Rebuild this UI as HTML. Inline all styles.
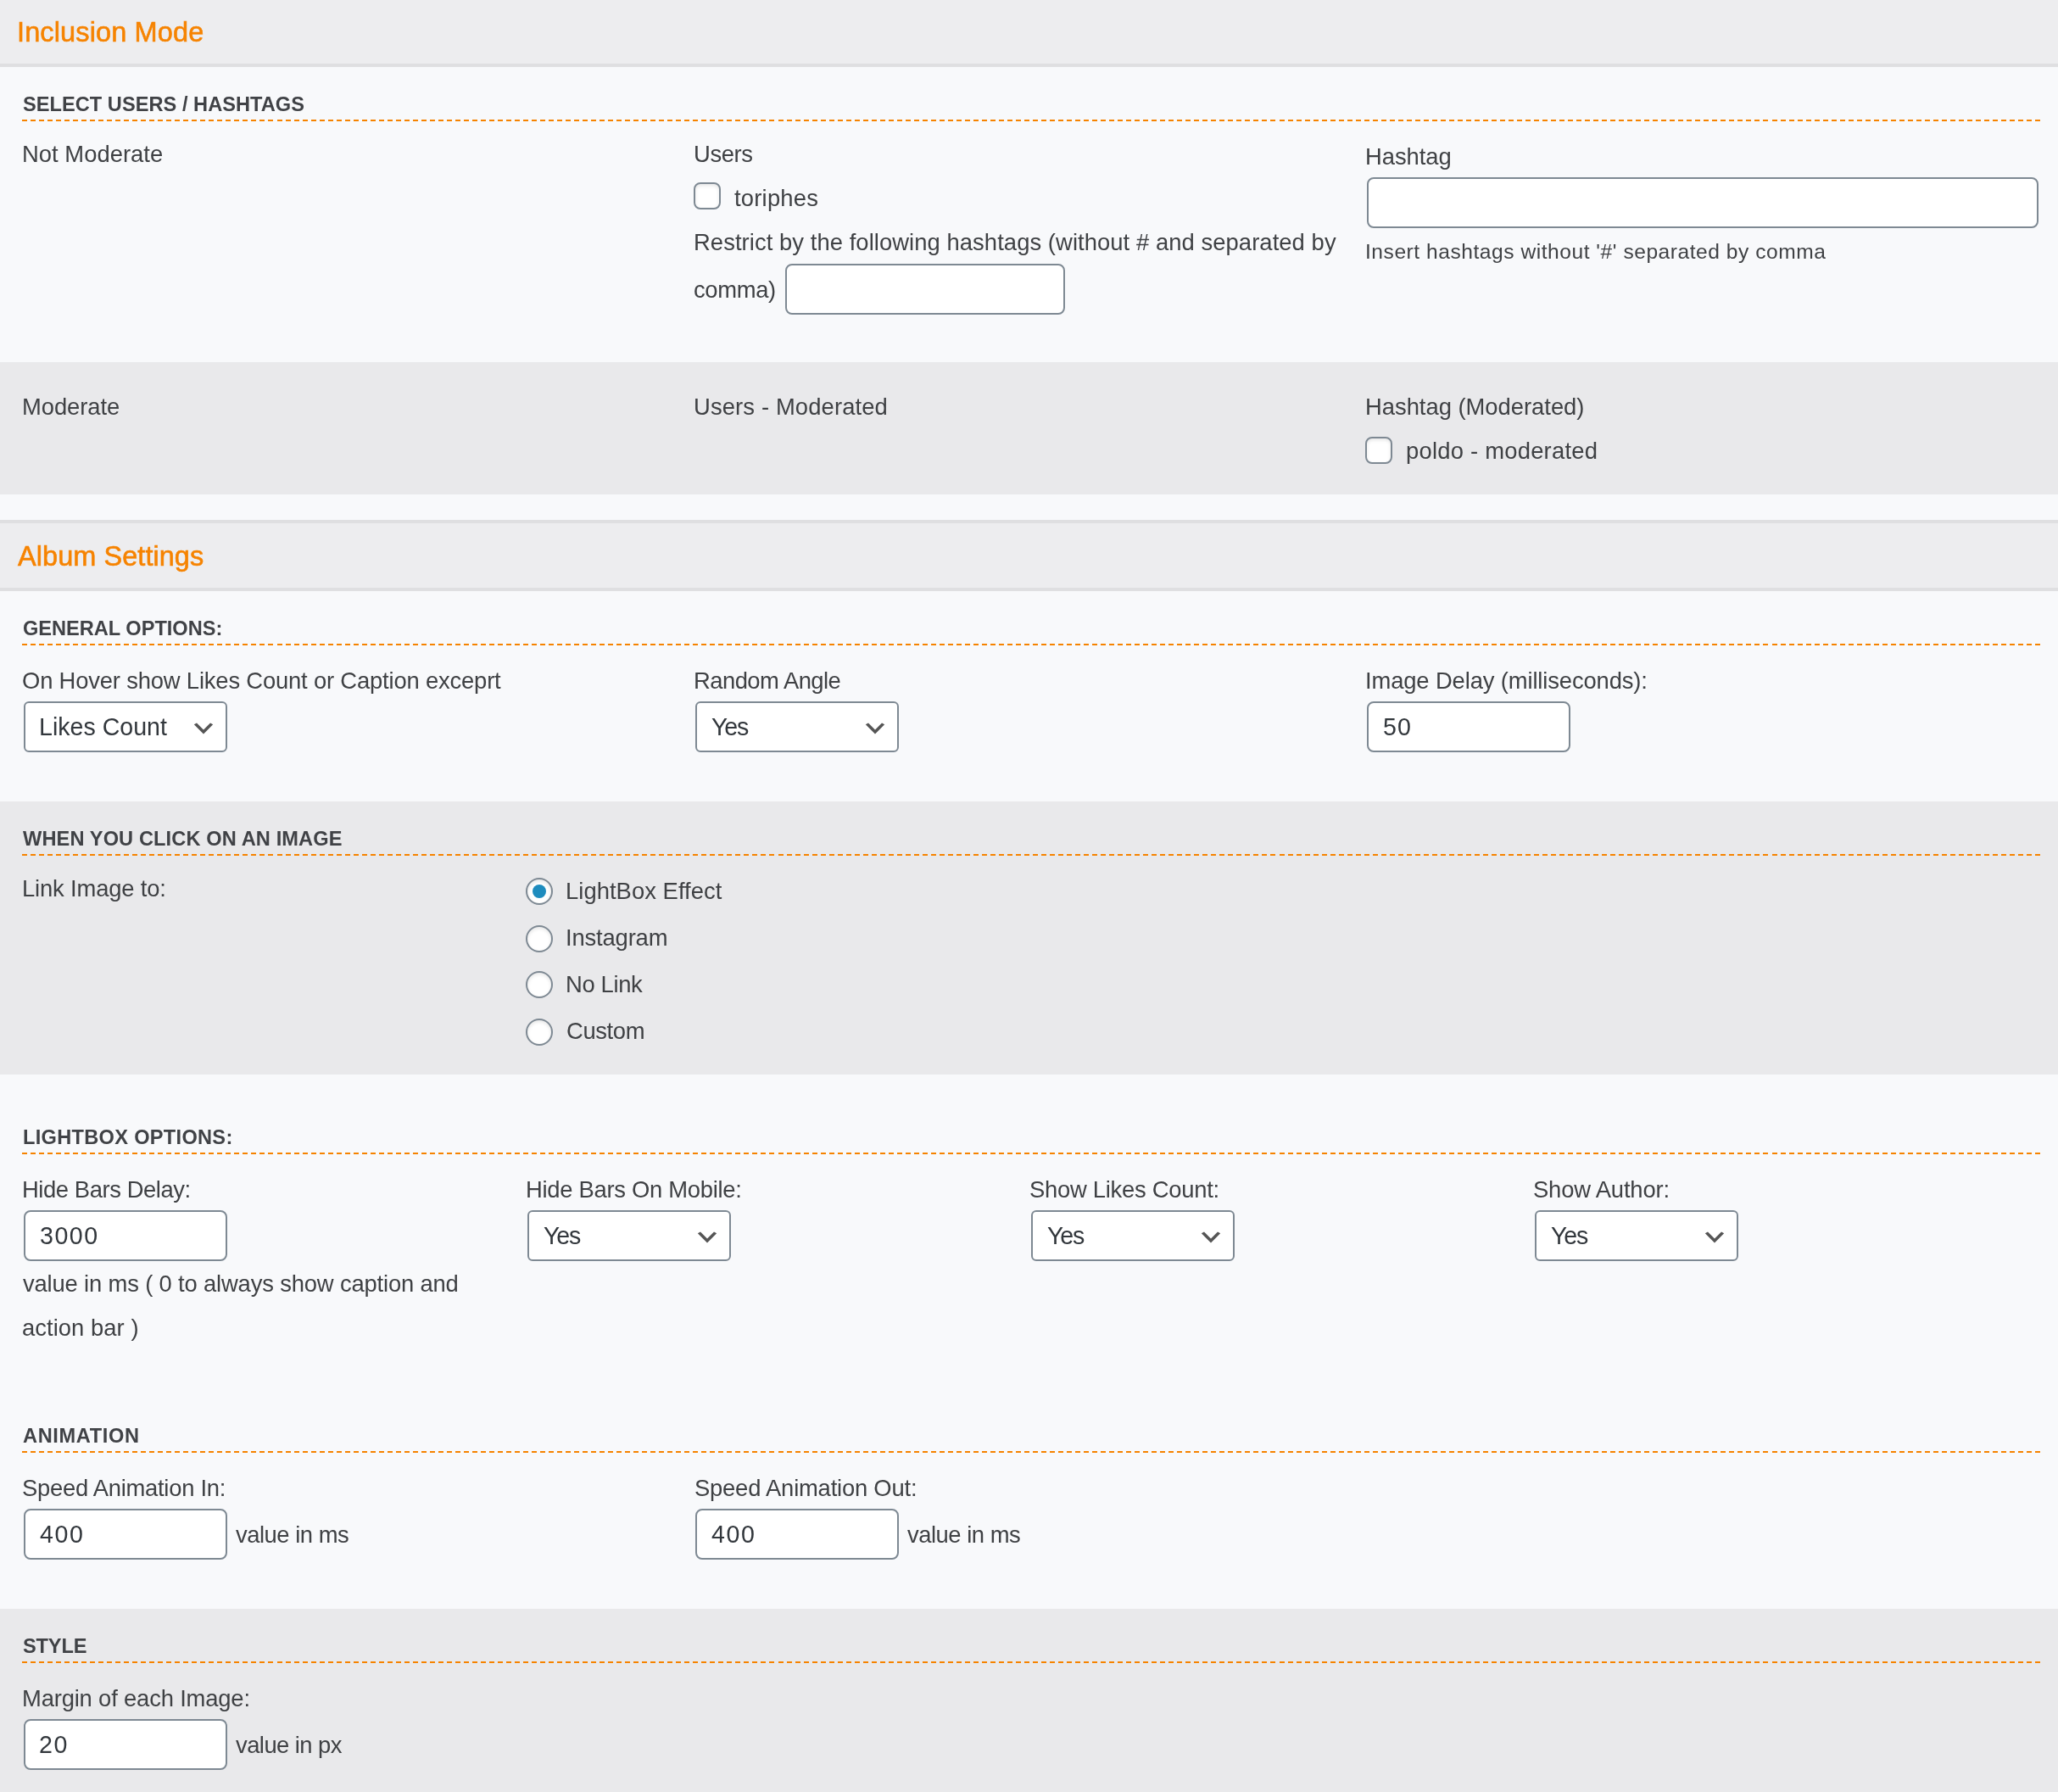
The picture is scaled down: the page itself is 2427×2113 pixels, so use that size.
<!DOCTYPE html>
<html><head><meta charset="utf-8"><style>
html,body{margin:0;padding:0;}
body{width:2427px;height:2113px;overflow:hidden;position:relative;background:#f8f9fb;font-family:"Liberation Sans",sans-serif;color:#3f4144;}
.t{position:absolute;white-space:nowrap;will-change:transform;}
.r{position:absolute;}
.b{position:absolute;box-sizing:border-box;border:2px solid #7e8993;background:#fff;}
.d{position:absolute;left:26px;width:2380px;height:2px;background:repeating-linear-gradient(90deg,#f68300 0 6px,transparent 6px 10.017px);}
.ch{position:absolute;}
.rd{position:absolute;box-sizing:border-box;width:32px;height:32px;border:2px solid #7e8993;border-radius:50%;background:#fff;box-shadow:inset 0 2px 4px rgba(0,0,0,.1);}
.cb{position:absolute;box-sizing:border-box;width:32px;height:32px;border:2px solid #7e8993;border-radius:8px;background:#fff;box-shadow:inset 0 2px 4px rgba(0,0,0,.1);}
.dot{position:absolute;width:16px;height:16px;border-radius:50%;background:#1e8cbe;}
</style></head><body>
<div class="r" style="left:0px;top:0px;width:2427px;height:75px;background:#ededef"></div><div class="r" style="left:0px;top:75px;width:2427px;height:4px;background:#dfdfe1"></div><div class="r" style="left:0px;top:427px;width:2427px;height:156px;background:#e9e9eb"></div><div class="r" style="left:0px;top:613px;width:2427px;height:4px;background:#dfdfe1"></div><div class="r" style="left:0px;top:617px;width:2427px;height:76px;background:#ededef"></div><div class="r" style="left:0px;top:693px;width:2427px;height:4px;background:#dfdfe1"></div><div class="r" style="left:0px;top:945px;width:2427px;height:322px;background:#e9e9eb"></div><div class="r" style="left:0px;top:1897px;width:2427px;height:216px;background:#e9e9eb"></div><div class="d" style="top:141px"></div><div class="d" style="top:759px"></div><div class="d" style="top:1007px"></div><div class="d" style="top:1359px"></div><div class="d" style="top:1711px"></div><div class="d" style="top:1959px"></div>
<div class="cb" style="left:818px;top:215px"></div><div class="cb" style="left:1610px;top:515px"></div><div class="b" style="left:926px;top:311px;width:330px;height:60px;border-radius:8px"></div><div class="b" style="left:1612px;top:209px;width:792px;height:60px;border-radius:8px"></div><div class="b" style="left:28px;top:827px;width:240px;height:60px;border-radius:6px"></div><svg class="ch" style="left:224px;top:843px" width="32" height="32" viewBox="0 0 20 20"><path d="M5 6l5 5 5-5 2 1-7 7-7-7 2-1z" fill="#555"/></svg><div class="b" style="left:820px;top:827px;width:240px;height:60px;border-radius:6px"></div><svg class="ch" style="left:1016px;top:843px" width="32" height="32" viewBox="0 0 20 20"><path d="M5 6l5 5 5-5 2 1-7 7-7-7 2-1z" fill="#555"/></svg><div class="b" style="left:1612px;top:827px;width:240px;height:60px;border-radius:8px"></div><div class="rd" style="left:620px;top:1035px"></div><div class="dot" style="left:628px;top:1043px"></div><div class="rd" style="left:620px;top:1091px"></div><div class="rd" style="left:620px;top:1145px"></div><div class="rd" style="left:620px;top:1201px"></div><div class="b" style="left:28px;top:1427px;width:240px;height:60px;border-radius:8px"></div><div class="b" style="left:622px;top:1427px;width:240px;height:60px;border-radius:6px"></div><svg class="ch" style="left:818px;top:1443px" width="32" height="32" viewBox="0 0 20 20"><path d="M5 6l5 5 5-5 2 1-7 7-7-7 2-1z" fill="#555"/></svg><div class="b" style="left:1216px;top:1427px;width:240px;height:60px;border-radius:6px"></div><svg class="ch" style="left:1412px;top:1443px" width="32" height="32" viewBox="0 0 20 20"><path d="M5 6l5 5 5-5 2 1-7 7-7-7 2-1z" fill="#555"/></svg><div class="b" style="left:1810px;top:1427px;width:240px;height:60px;border-radius:6px"></div><svg class="ch" style="left:2006px;top:1443px" width="32" height="32" viewBox="0 0 20 20"><path d="M5 6l5 5 5-5 2 1-7 7-7-7 2-1z" fill="#555"/></svg><div class="b" style="left:28px;top:1779px;width:240px;height:60px;border-radius:8px"></div><div class="b" style="left:820px;top:1779px;width:240px;height:60px;border-radius:8px"></div><div class="b" style="left:28px;top:2027px;width:240px;height:60px;border-radius:8px"></div>
<div class="t" style="left:19.50px;top:18.70px;font-size:32.5px;line-height:39px;letter-spacing:0.129px;color:#f68300;-webkit-text-stroke:0.6px #f68300;">Inclusion Mode</div><div class="t" style="left:27.00px;top:109.30px;font-size:23.6px;line-height:28px;font-weight:700;letter-spacing:0.032px;color:#404246;">SELECT USERS / HASHTAGS</div><div class="t" style="left:25.80px;top:165.00px;font-size:27.4px;line-height:33px;letter-spacing:0.026px;">Not Moderate</div><div class="t" style="left:817.90px;top:165.00px;font-size:27.4px;line-height:33px;letter-spacing:-0.383px;">Users</div><div class="t" style="left:865.50px;top:217.00px;font-size:27.4px;line-height:33px;letter-spacing:0.207px;">toriphes</div><div class="t" style="left:818.00px;top:268.70px;font-size:27.4px;line-height:33px;letter-spacing:0.064px;">Restrict by the following hashtags (without # and separated by</div><div class="t" style="left:818.10px;top:325.00px;font-size:27.4px;line-height:33px;letter-spacing:-0.359px;">comma)</div><div class="t" style="left:1610.00px;top:167.90px;font-size:27.4px;line-height:33px;letter-spacing:-0.048px;">Hashtag</div><div class="t" style="left:1609.70px;top:281.50px;font-size:24.6px;line-height:30px;letter-spacing:0.526px;">Insert hashtags without '#' separated by comma</div><div class="t" style="left:26.00px;top:463.00px;font-size:27.4px;line-height:33px;letter-spacing:-0.069px;">Moderate</div><div class="t" style="left:817.90px;top:463.00px;font-size:27.4px;line-height:33px;letter-spacing:0.126px;">Users - Moderated</div><div class="t" style="left:1610.00px;top:463.00px;font-size:27.4px;line-height:33px;letter-spacing:-0.022px;">Hashtag (Moderated)</div><div class="t" style="left:1658.00px;top:514.90px;font-size:27.4px;line-height:33px;letter-spacing:0.227px;">poldo - moderated</div><div class="t" style="left:21.20px;top:636.70px;font-size:32.5px;line-height:39px;letter-spacing:0.051px;color:#f68300;-webkit-text-stroke:0.6px #f68300;">Album Settings</div><div class="t" style="left:27.00px;top:726.80px;font-size:23.6px;line-height:28px;font-weight:700;letter-spacing:-0.019px;color:#404246;">GENERAL OPTIONS:</div><div class="t" style="left:26.20px;top:786.00px;font-size:27.4px;line-height:33px;letter-spacing:-0.180px;">On Hover show Likes Count or Caption exceprt</div><div class="t" style="left:46.00px;top:839.80px;font-size:28.6px;line-height:34px;letter-spacing:-0.005px;color:#32373c;">Likes Count</div><div class="t" style="left:817.90px;top:786.00px;font-size:27.4px;line-height:33px;letter-spacing:-0.533px;">Random Angle</div><div class="t" style="left:838.70px;top:839.80px;font-size:28.6px;line-height:34px;letter-spacing:-1.174px;color:#32373c;">Yes</div><div class="t" style="left:1610.00px;top:786.00px;font-size:27.4px;line-height:33px;letter-spacing:-0.134px;">Image Delay (milliseconds):</div><div class="t" style="left:1630.90px;top:839.80px;font-size:28.6px;line-height:34px;letter-spacing:1.198px;color:#32373c;">50</div><div class="t" style="left:27.00px;top:974.80px;font-size:23.6px;line-height:28px;font-weight:700;letter-spacing:0.115px;color:#404246;">WHEN YOU CLICK ON AN IMAGE</div><div class="t" style="left:26.00px;top:1030.80px;font-size:27.4px;line-height:33px;letter-spacing:-0.164px;">Link Image to:</div><div class="t" style="left:667.00px;top:1033.70px;font-size:27.4px;line-height:33px;letter-spacing:0.041px;">LightBox Effect</div><div class="t" style="left:667.00px;top:1088.70px;font-size:27.4px;line-height:33px;letter-spacing:-0.159px;">Instagram</div><div class="t" style="left:667.00px;top:1143.70px;font-size:27.4px;line-height:33px;letter-spacing:-0.363px;">No Link</div><div class="t" style="left:667.50px;top:1198.70px;font-size:27.4px;line-height:33px;letter-spacing:-0.371px;">Custom</div><div class="t" style="left:27.00px;top:1326.80px;font-size:23.6px;line-height:28px;font-weight:700;letter-spacing:0.298px;color:#404246;">LIGHTBOX OPTIONS:</div><div class="t" style="left:26.00px;top:1385.80px;font-size:27.4px;line-height:33px;letter-spacing:-0.420px;">Hide Bars Delay:</div><div class="t" style="left:46.60px;top:1439.60px;font-size:28.6px;line-height:34px;letter-spacing:1.531px;color:#32373c;">3000</div><div class="t" style="left:26.90px;top:1496.80px;font-size:27.4px;line-height:33px;letter-spacing:-0.167px;">value in ms ( 0 to always show caption and</div><div class="t" style="left:26.00px;top:1548.60px;font-size:27.4px;line-height:33px;letter-spacing:0.046px;">action bar )</div><div class="t" style="left:620.00px;top:1385.80px;font-size:27.4px;line-height:33px;letter-spacing:-0.285px;">Hide Bars On Mobile:</div><div class="t" style="left:640.70px;top:1439.80px;font-size:28.6px;line-height:34px;letter-spacing:-1.174px;color:#32373c;">Yes</div><div class="t" style="left:1213.50px;top:1385.80px;font-size:27.4px;line-height:33px;letter-spacing:-0.261px;">Show Likes Count:</div><div class="t" style="left:1234.70px;top:1439.80px;font-size:28.6px;line-height:34px;letter-spacing:-1.174px;color:#32373c;">Yes</div><div class="t" style="left:1808.00px;top:1385.80px;font-size:27.4px;line-height:33px;letter-spacing:-0.175px;">Show Author:</div><div class="t" style="left:1828.70px;top:1439.80px;font-size:28.6px;line-height:34px;letter-spacing:-1.174px;color:#32373c;">Yes</div><div class="t" style="left:27.00px;top:1679.00px;font-size:23.6px;line-height:28px;font-weight:700;letter-spacing:0.638px;color:#404246;">ANIMATION</div><div class="t" style="left:26.00px;top:1737.70px;font-size:27.4px;line-height:33px;letter-spacing:-0.265px;">Speed Animation In:</div><div class="t" style="left:47.00px;top:1791.90px;font-size:28.6px;line-height:34px;letter-spacing:1.648px;color:#32373c;">400</div><div class="t" style="left:278.40px;top:1792.70px;font-size:27.4px;line-height:33px;letter-spacing:-0.474px;">value in ms</div><div class="t" style="left:818.50px;top:1737.70px;font-size:27.4px;line-height:33px;letter-spacing:-0.209px;">Speed Animation Out:</div><div class="t" style="left:839.00px;top:1791.90px;font-size:28.6px;line-height:34px;letter-spacing:1.648px;color:#32373c;">400</div><div class="t" style="left:1070.40px;top:1792.70px;font-size:27.4px;line-height:33px;letter-spacing:-0.474px;">value in ms</div><div class="t" style="left:27.00px;top:1926.80px;font-size:23.6px;line-height:28px;font-weight:700;letter-spacing:-0.149px;color:#404246;">STYLE</div><div class="t" style="left:26.00px;top:1985.80px;font-size:27.4px;line-height:33px;letter-spacing:-0.176px;">Margin of each Image:</div><div class="t" style="left:46.00px;top:2039.80px;font-size:28.6px;line-height:34px;letter-spacing:1.698px;color:#32373c;">20</div><div class="t" style="left:278.40px;top:2040.80px;font-size:27.4px;line-height:33px;letter-spacing:-0.545px;">value in px</div>
</body></html>
